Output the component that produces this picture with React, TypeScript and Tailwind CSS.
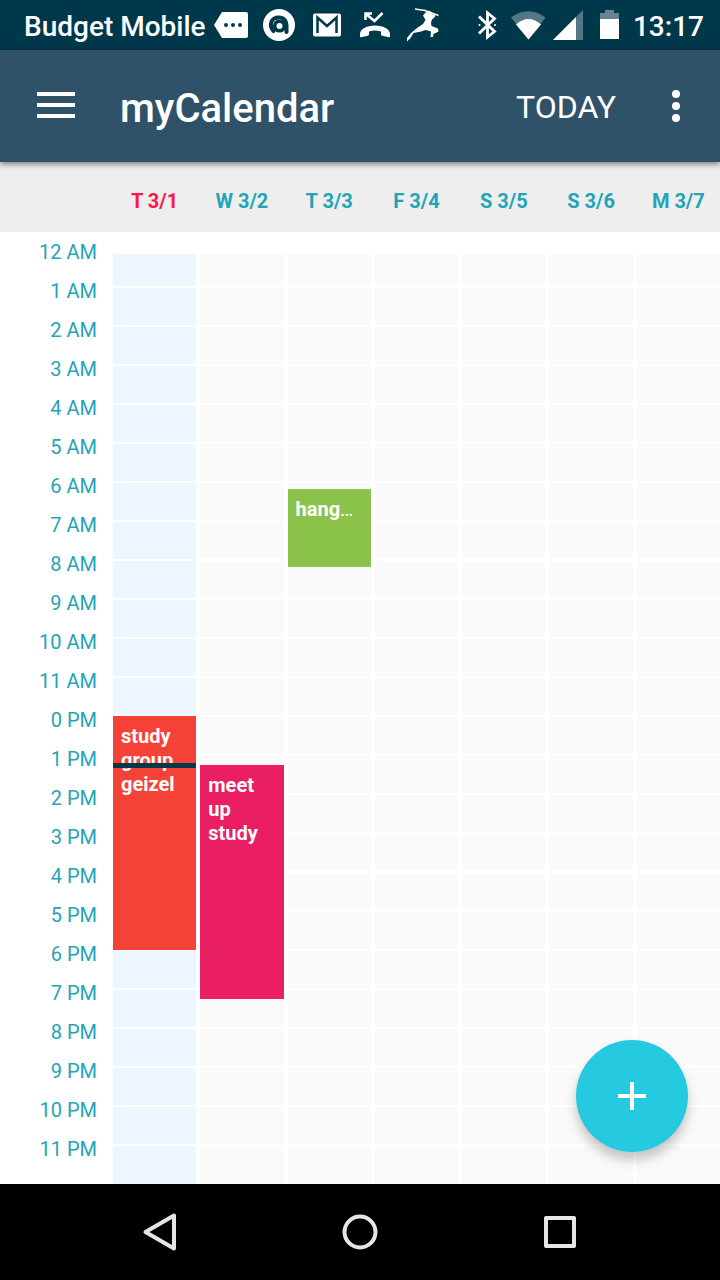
const HOUR = 39;

type CalendarEvent = {
  title: string;
  start: number;
  hours: number;
  color: string;
  truncated?: boolean;
};

type Day = { label: string; today?: boolean; events: CalendarEvent[] };

const days: Day[] = [
  {
    label: "T 3/1",
    today: true,
    events: [{ title: "study group geizel", start: 12, hours: 6, color: "bg-[#f44336]" }],
  },
  {
    label: "W 3/2",
    events: [{ title: "meet up study", start: 13.25, hours: 6, color: "bg-[#e91e63]" }],
  },
  {
    label: "T 3/3",
    events: [{ title: "hang", start: 6.18, hours: 2, color: "bg-[#8bc34a]", truncated: true }],
  },
  { label: "F 3/4", events: [] },
  { label: "S 3/5", events: [] },
  { label: "S 3/6", events: [] },
  { label: "M 3/7", events: [] },
];

const hours = Array.from({ length: 24 }, (_, h) =>
  h === 0 ? "12 AM" : h < 12 ? `${h} AM` : `${h - 12} PM`
);

const NOW = 13.24;

function StatusBar() {
  return (
    <div className="flex h-[50px] items-center bg-[#00384b] pl-6 pr-4 text-white">
      <span className="whitespace-nowrap pt-1 text-[28px] font-medium leading-8">Budget Mobile</span>
      <div className="flex flex-1 pl-px" aria-hidden="true">
        <svg className="h-[50px] w-12" viewBox="0 0 48 50">
          <path fill="#fff" d="M15 12h24a2 2 0 0 1 2 2v22a2 2 0 0 1-2 2H15L7 25z" />
          <g fill="#00384b">
            <circle cx="19" cy="25" r="2" />
            <circle cx="26" cy="25" r="2" />
            <circle cx="33" cy="25" r="2" />
          </g>
        </svg>
        <svg className="h-[50px] w-12" viewBox="0 0 48 50" fill="none">
          <circle cx="24" cy="25" r="16" fill="#fff" />
          <path
            stroke="#00384b"
            strokeWidth="4"
            strokeLinecap="round"
            d="M18.500 31C13.500 25 16 17.500 24 17.500c5 0 7.500 3.500 7.500 7.500v7"
          />
          <circle cx="24.500" cy="26" r="4.800" stroke="#00384b" strokeWidth="3.600" />
        </svg>
        <svg className="h-[50px] w-12" viewBox="0 0 48 50" fill="none">
          <rect x="10" y="13.500" width="28" height="23" rx="2" fill="#fff" />
          <path stroke="#00384b" strokeWidth="2.500" d="M14.500 33V17.500L24 26l9.500-8.500V33" />
        </svg>
        <svg className="h-[50px] w-12" viewBox="0 0 48 50" fill="none">
          <path stroke="#fff" strokeWidth="2.500" d="M14.500 20v-6.500H21M15 14l8.500 7 8-8" />
          <path
            fill="#fff"
            d="M9 34c0-5 7-8.500 15-8.500S39 29 39 34v2.500q0 1-1 .8l-7-1.500q-1-.3-1-1.300v-3c-4-1.500-8-1.500-12 0v3q0 1-1 1.300l-7 1.500q-1 .2-1-.8z"
          />
        </svg>
        <svg className="h-[50px] w-12" viewBox="0 0 48 50" fill="none">
          <path stroke="#fff" strokeWidth="1.500" d="M16 9l10 1.500 13.500 5" />
          <path
            fill="#fff"
            d="M27 12q2.500-2.500 5 0l1.500 2.500 2.500-.5v3l-3 2.500-1 3 .5 3.500L39 28.500l.5 3-5 2.500-.5 3h-2.500l.5-5.500-5.500-1.500-4.500 1.500-7.500 1.500-3 5-3.500 3.500v-3.500l4-5 6-5 6-4 2.500-4-2.500-4.500z"
          />
        </svg>
      </div>
      <div className="flex pr-0.5" aria-hidden="true">
        <svg className="h-[50px] w-[41px]" viewBox="0 0 41 50" fill="none">
          <path stroke="#fff" strokeWidth="2.800" d="M12 16.500l15.500 15-7 5.500V13l7 5.500-15.500 15" />
          <circle cx="12.500" cy="25" r="1" fill="#fff" />
          <circle cx="28" cy="25" r="1" fill="#fff" />
        </svg>
        <svg className="h-[50px] w-[41px]" viewBox="0 0 41 50">
          <path fill="#557785" d="M3 17.500Q20 5 37.500 17.500L20.500 39.500z" />
          <path fill="#fff" d="M8 24.500Q20.500 13.500 33 24.500L20.500 39.500z" />
        </svg>
        <svg className="h-[50px] w-[41px]" viewBox="0 0 41 50">
          <path fill="#557785" d="M34 10v30H4z" />
          <path fill="#fff" d="M27 17v23H4z" />
        </svg>
        <svg className="h-[50px] w-[41px]" viewBox="0 0 41 50">
          <path fill="#668591" d="M10 13h5v-3h9v3h5v7H10z" />
          <path fill="#fff" d="M10 19h19v20H10z" />
        </svg>
      </div>
      <time className="pt-1 text-[28px] font-medium leading-8">13:17</time>
    </div>
  );
}

function AppBar() {
  return (
    <header className="relative z-10 flex h-28 items-center bg-[#2f5268] pl-8 pr-5 text-white shadow-[0_2px_6px_rgba(0,0,0,0.5)]">
      <button type="button" aria-label="Open menu" className="flex h-12 w-12 items-center">
        <svg className="h-12 w-12" viewBox="0 0 48 48" fill="#fff">
          <path d="M5 10h38v4H5zM5 21h38v4H5zM5 32h38v4H5z" />
        </svg>
      </button>
      <h1 className="flex-1 pl-10 pt-1.5 text-[40px] font-medium leading-12">myCalendar</h1>
      <button type="button" className="px-9 pt-0.5 text-[32px] leading-10">
        TODAY
      </button>
      <button type="button" aria-label="More options" className="flex h-12 w-12 items-center">
        <svg className="h-12 w-12" viewBox="0 0 48 48" fill="#fff">
          <circle cx="24" cy="12" r="4" />
          <circle cx="24" cy="24" r="4" />
          <circle cx="24" cy="36" r="4" />
        </svg>
      </button>
    </header>
  );
}

function DayColumn({ day }: { day: Day }) {
  const cell = day.today ? "bg-[#edf5ff]" : "bg-[#fafafa]";
  return (
    <div className="relative flex flex-col gap-0.5 overflow-hidden">
      {hours.map((h, i) => (
        <div key={h} className={`${i === 0 ? "h-8" : i === 23 ? "flex-1" : "h-[37px]"} ${cell}`} />
      ))}
      {day.events.map((e) => (
        <button
          type="button"
          key={e.title}
          className={`absolute inset-x-0 flex items-start overflow-hidden p-2 text-left text-xl font-bold leading-6 text-white ${e.color}`}
          style={{ top: Math.round(e.start * HOUR) - 6, height: e.hours * HOUR }}
        >
          <span>
            {e.title}
            {e.truncated && <span className="font-normal">…</span>}
          </span>
        </button>
      ))}
      {day.today && (
        <div className="absolute inset-x-0 h-[5px] bg-[#06384b]" style={{ top: Math.round(NOW * HOUR) - 7 }} />
      )}
    </div>
  );
}

function Calendar() {
  return (
    <main className="relative flex flex-1 flex-col bg-white">
      <div className="flex h-[70px] items-center bg-[#eeeeee] pl-[113px] pt-2">
        <div className="grid flex-1 grid-cols-7 gap-1 text-center text-xl font-bold">
          {days.map((d) => (
            <div key={d.label} className={d.today ? "text-[#ff1744]" : "text-[#1fa5b7]"}>
              {d.label}
            </div>
          ))}
        </div>
      </div>
      <div className="flex flex-1">
        <div className="w-[113px] pr-4 pt-px text-right text-xl text-[#1fa5b7]">
          {hours.map((h) => (
            <div key={h} className="h-[39px] leading-[39px]">
              {h}
            </div>
          ))}
        </div>
        <div className="grid flex-1 grid-cols-7 gap-1 pt-[22px]">
          {days.map((d) => (
            <DayColumn key={d.label} day={d} />
          ))}
        </div>
      </div>
      <button
        type="button"
        aria-label="Add event"
        className="absolute bottom-8 right-8 flex size-28 items-center justify-center rounded-full bg-[#26cae0] shadow-[0_8px_12px_rgba(0,0,0,0.22)]"
      >
        <svg className="size-7" viewBox="0 0 28 28" fill="#fff">
          <path d="M12 0h4v12h12v4H16v12h-4V16H0v-4h12z" />
        </svg>
      </button>
    </main>
  );
}

function NavBar() {
  return (
    <nav className="flex h-24 justify-center bg-black">
      <button type="button" aria-label="Back" className="flex w-[200px] items-center justify-center">
        <svg className="size-12" viewBox="0 0 48 48" fill="none" stroke="#e6e6e6" strokeWidth="4" strokeLinejoin="round">
          <path d="M38 7.500v33L9.500 24z" />
        </svg>
      </button>
      <button type="button" aria-label="Home" className="flex w-[200px] items-center justify-center">
        <svg className="size-12" viewBox="0 0 48 48" fill="none" stroke="#e6e6e6" strokeWidth="4">
          <circle cx="24" cy="24" r="15.500" />
        </svg>
      </button>
      <button type="button" aria-label="Recent apps" className="flex w-[200px] items-center justify-center">
        <svg className="size-12" viewBox="0 0 48 48" fill="none" stroke="#e6e6e6" strokeWidth="4" strokeLinejoin="round">
          <path d="M10 10h28v28H10z" />
        </svg>
      </button>
    </nav>
  );
}

export default function App() {
  return (
    <div className="flex min-h-screen flex-col font-[Roboto,sans-serif]">
      <StatusBar />
      <AppBar />
      <Calendar />
      <NavBar />
    </div>
  );
}
